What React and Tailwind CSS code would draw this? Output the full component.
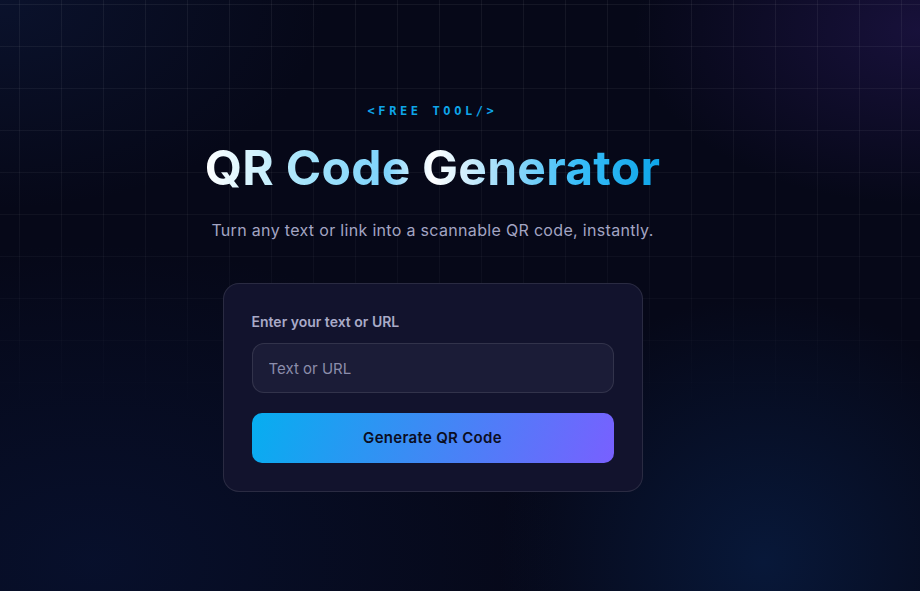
import React, { useState } from "react";

export default function App() {
  const [value, setValue] = useState("");

  return (
    <div className="relative min-h-screen h-[591px] overflow-hidden bg-[#060818] font-['Inter',sans-serif]">
      {/* Background glows */}
      <div className="pointer-events-none absolute inset-0 bg-[radial-gradient(ellipse_at_0%_0%,rgba(20,40,90,0.3),transparent_25%)]" />
      <div className="pointer-events-none absolute inset-0 bg-[radial-gradient(ellipse_at_100%_5%,rgba(50,30,110,0.4),transparent_22%)]" />
      <div className="pointer-events-none absolute inset-0 bg-[radial-gradient(circle_at_83%_95%,rgba(10,40,90,0.5),transparent_28%)]" />
      <div className="pointer-events-none absolute inset-0 bg-[radial-gradient(ellipse_at_10%_95%,rgba(10,30,80,0.35),transparent_40%)]" />

      {/* Grid */}
      <div className="pointer-events-none absolute inset-0 bg-[linear-gradient(rgba(255,255,255,0.06)_1px,transparent_1px),linear-gradient(90deg,rgba(255,255,255,0.06)_1px,transparent_1px)] bg-[size:42px_42px] bg-[position:19px_4px] [mask-image:linear-gradient(to_bottom,black_0%,rgba(0,0,0,0.7)_40%,transparent_72%)]" />

      <div className="relative flex flex-col items-center pt-[103px] pr-[55px]">
        <span className="font-['DejaVu_Sans_Mono',monospace] text-[12px] font-bold leading-4 tracking-[0.3em] text-[#0ea5e9]">
          &lt;FREE TOOL/&gt;
        </span>

        <h1 className="mt-[21px] text-[48px] font-bold leading-[56px] tracking-[0.005em] bg-[linear-gradient(90deg,#ffffff_0%,#a5e4fb_22%,#7dd3fc_40%,#ffffff_50%,#9fdcf9_65%,#38bdf8_82%,#0ea5e9_100%)] bg-clip-text text-transparent">
          QR Code Generator
        </h1>

        <p className="mt-[22px] text-[16px] leading-6 tracking-[0.02em] text-[#a3a5c3]">
          Turn any text or link into a scannable QR code, instantly.
        </p>

        <div className="mt-[41px] w-[420px] rounded-2xl border border-white/10 bg-[#12132d] p-7">
          <label className="block text-[14px] font-semibold leading-5 text-[#a9aac8]">
            Enter your text or URL
          </label>
          <input
            type="text"
            value={value}
            onChange={(e) => setValue(e.target.value)}
            placeholder="Text or URL"
            className="mt-[11px] h-[50px] w-full rounded-xl border border-white/10 bg-[#1b1c37] px-4 text-[15px] text-white placeholder:text-[#8c8dab] outline-none"
          />
          <button className="mt-5 h-[50px] w-full rounded-[10px] bg-[linear-gradient(110deg,#06aef0_0%,#3a8cf4_45%,#7860ff_100%)] text-[15px] font-semibold tracking-[0.02em] text-[#0b0d22]">
            Generate QR Code
          </button>
        </div>
      </div>
    </div>
  );
}
